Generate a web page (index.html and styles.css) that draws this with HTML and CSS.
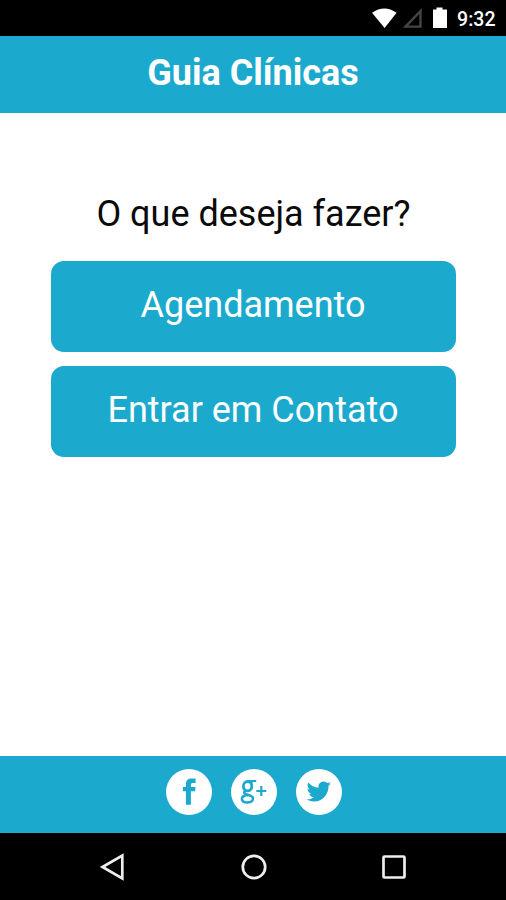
FILE: index.html
```html
<!DOCTYPE html>
<html lang="pt-BR">
<head>
<meta charset="utf-8">
<title>Guia Clínicas</title>
<link rel="stylesheet" href="styles.css">
</head>
<body>
<div class="statusbar">
  <svg class="status-icons" width="78" height="24" viewBox="0 0 78 24" aria-hidden="true">
    <path fill="#fff" d="M0 6.800Q12.300-1.800 24.600 6.800L12.600 22z"/>
    <path fill="none" stroke="#454545" stroke-width="2.400" d="M33.500 20.600H48.500V5z"/>
    <path fill="#fff" d="M61 3.500h3.500V1.500h6v2H75V22H61z"/>
  </svg>
  <span class="clock">9:32</span>
</div>
<header class="header"><h1 class="title">Guia Clínicas</h1></header>
<main class="content">
  <p class="question">O que deseja fazer?</p>
  <button class="action">Agendamento</button>
  <button class="action">Entrar em Contato</button>
</main>
<footer class="social">
  <a class="social-link" aria-label="Facebook">
    <svg width="46" height="46" viewBox="0 0 46 46"><path fill="#1baacd" d="M19.900 35.800V22.300H16.900V18h3v-2.600c0-3.900 2-5.800 5.800-5.800h3.900V14h-2.500c-1.700 0-2.200.5-2.200 1.900V18h4.700l-.5 4.300h-4.200v13.500z"/></svg>
  </a>
  <a class="social-link" aria-label="Google Plus">
    <svg width="46" height="46" viewBox="0 0 46 46" fill="none" stroke="#1baacd">
      <ellipse cx="16.600" cy="17.200" rx="4.200" ry="4.700" stroke-width="2.800"/>
      <path stroke-width="2" d="M17 12h8.200M20 12.500l1.200 2"/>
      <path stroke-width="2.600" d="M14.500 21.500c-2.500 2.300-1 3.300 1.500 4 3.500.9 6 1.700 6 4 0 2.800-3 4-5.800 4-3.300 0-5.300-1.300-5.300-3.400 0-2.600 2.500-3.900 6.200-4.200"/>
      <path stroke-width="2.200" d="M25.300 22h10M30.300 17v10"/>
    </svg>
  </a>
  <a class="social-link" aria-label="Twitter">
    <svg width="46" height="46" viewBox="0 0 46 46"><path fill="#1baacd" d="M35 14.200a9 9 0 0 1-2.500 2.600v.7c0 7.500-5.600 15-14.200 15-2.800 0-5.400-.8-7.600-2.200 2.700.3 5.200-.5 7.200-2-2.200 0-4-1.500-4.600-3.500.8.100 1.500.1 2.200-.1-2.300-.5-4-2.500-4-5 .7.400 1.500.6 2.300.7-2.200-1.500-2.900-4.500-1.500-6.800 2.500 3 6.200 5 10.300 5.200-.8-3.200 1.600-6.300 4.900-6.300 1.400 0 2.700.6 3.700 1.600 1.100-.2 2.200-.6 3.200-1.200-.4 1.100-1.100 2.100-2.200 2.700 1-.1 1.900-.4 2.800-.8z"/></svg>
  </a>
</footer>
<nav class="navbar">
  <svg width="28" height="28" viewBox="0 0 28 28"><path d="M3.500 14L23.300 2.500V25.500z"/></svg>
  <svg width="28" height="28" viewBox="0 0 28 28"><circle cx="14" cy="14" r="11.200"/></svg>
  <svg width="28" height="28" viewBox="0 0 28 28"><rect x="3.500" y="3.500" width="21" height="21" rx="1"/></svg>
</nav>
</body>
</html>
```
FILE: styles.css
```css
* { box-sizing: border-box; }
body {
  margin: 0;
  height: 900px;
  display: flex;
  flex-direction: column;
  background: #fff;
  font-family: Roboto, sans-serif;
}
.statusbar {
  height: 36px;
  flex: none;
  display: flex;
  justify-content: flex-end;
  align-items: flex-start;
  padding: 6px 10.500px 0 0;
  background: #000;
}
.status-icons { margin-right: 7px; }
.clock {
  color: #fff;
  font-size: 19.500px;
  font-weight: 500;
  line-height: 27px;
}
.header {
  height: 77px;
  flex: none;
  padding-top: 17px;
  background: #1baacd;
}
.title {
  margin: 0;
  color: #fff;
  font-size: 36px;
  line-height: 40px;
  font-weight: 700;
  text-align: center;
}
.content {
  flex: 1;
  display: flex;
  flex-direction: column;
  align-items: center;
  padding-top: 79px;
}
.question {
  margin: 0 0 25px;
  padding-left: 1px;
  color: #0a0a0a;
  font-size: 36px;
  line-height: 44px;
  white-space: nowrap;
}
.action {
  width: 405px;
  height: 91px;
  margin: 0 0 14px;
  padding: 0 0 4px;
  border: 0;
  border-radius: 13px;
  background: #1baacd;
  color: #fff;
  font-family: inherit;
  font-size: 36px;
}
.social {
  height: 77px;
  flex: none;
  display: flex;
  justify-content: center;
  gap: 19px;
  padding: 13px 0 0 1px;
  background: #1baacd;
}
.social-link {
  width: 46px;
  height: 46px;
  border-radius: 50%;
  background: #fff;
}
.social-link svg { display: block; }
.navbar {
  height: 67px;
  flex: none;
  display: flex;
  justify-content: space-between;
  align-items: center;
  padding: 0 98px 0 99px;
  background: #000;
}
.navbar svg {
  fill: none;
  stroke: #eee;
  stroke-width: 2.700;
}
```
